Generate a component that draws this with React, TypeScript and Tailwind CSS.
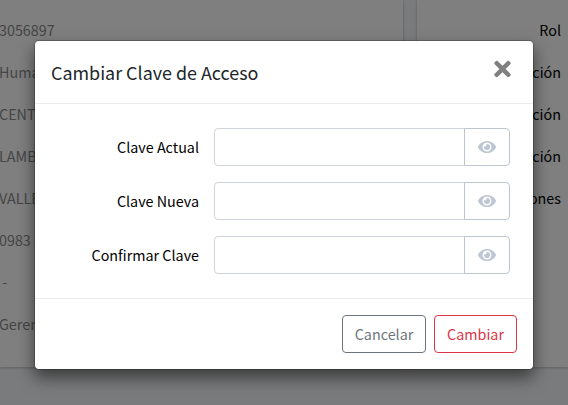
import { FaEye, FaTimes } from "react-icons/fa";

const details = ["3056897", "Huma", "CENT", "LAMB", "VALLE", "0983 2", "\u00a0-", "Geren"];
const labels = ["Rol", "Dirección", "Sección", "Función", "Observaciones"];
const fields = ["Clave Actual", "Clave Nueva", "Confirmar Clave"];

const card = "bg-white shadow-[0_0_1px_rgba(0,0,0,0.125),0_1px_3px_rgba(0,0,0,0.2)]";

function PasswordField({ label }: { label: string }) {
  return (
    <div className="flex h-[38px] items-center">
      <label className="w-[163px] pr-[15px] pl-0 text-right leading-6 whitespace-nowrap text-black">{label}</label>
      <div className="flex h-[38px] w-[296px]">
        <input
          type="password"
          aria-label={label}
          className="h-full w-[251px] rounded-l-[4px] border border-[#ced4da] bg-white px-3 outline-none"
        />
        <button
          type="button"
          aria-label="Mostrar"
          className="-ml-px flex h-full w-[46px] items-center justify-center rounded-r-[4px] border border-[#bdc6d0] text-[#bdc6d3]"
        >
          <FaEye className="h-4 w-[18px]" />
        </button>
      </div>
    </div>
  );
}

export default function App() {
  return (
    <div className="relative h-[405px] w-[568px] overflow-hidden bg-[#f4f6f9] font-['Noto_Sans_CJK_SC','Noto_Sans',sans-serif] text-[14.33px]">
      <div className="flex h-[367px] gap-[14px]">
        <div className={`w-[402.5px] shrink-0 pt-[9px] ${card}`}>
          {details.map((text) => (
            <div key={text} className="-ml-px h-[42px] pt-[9px] leading-6 whitespace-nowrap text-[#8b8b8b]">
              {text}
            </div>
          ))}
        </div>
        <div className={`flex-1 pt-[9px] pr-[7px] ${card}`}>
          {labels.map((text) => (
            <div key={text} className="h-[42px] pt-[9px] text-right leading-6 whitespace-nowrap text-black">
              {text}
            </div>
          ))}
        </div>
      </div>

      <div className="absolute inset-0 bg-black/50 pt-[41px] pl-[35px]">
        <div className="flex h-[328px] w-[498px] flex-col rounded-[4px] bg-white shadow-[0_0_0_1px_rgba(0,0,0,0.2),0_8px_16px_1px_rgba(0,0,0,0.5)]">
          <div className="flex h-[63px] shrink-0 items-start justify-between border-b border-[#e9ecef] pt-4 pr-[22px] pl-4">
            <h4 className="text-[17.91px] leading-[30px] text-[#212529]">Cambiar Clave de Acceso</h4>
            <button type="button" aria-label="Cerrar" className="text-[#808080]">
              <FaTimes className="h-[24px] w-[17px]" />
            </button>
          </div>
          <div className="flex flex-1 flex-col gap-4 pt-6 pl-4">
            {fields.map((label) => (
              <PasswordField key={label} label={label} />
            ))}
          </div>
          <div className="flex h-[71px] shrink-0 items-start justify-end gap-2 border-t border-[#e9ecef] pt-4 pr-4">
            <button type="button" className="h-[38px] w-[84px] rounded-[4px] border border-[#6c757d] text-[#6c757d]">
              Cancelar
            </button>
            <button type="button" className="h-[38px] w-[83px] rounded-[4px] border border-[#dc3545] text-[#dc3545]">
              Cambiar
            </button>
          </div>
        </div>
      </div>
    </div>
  );
}
